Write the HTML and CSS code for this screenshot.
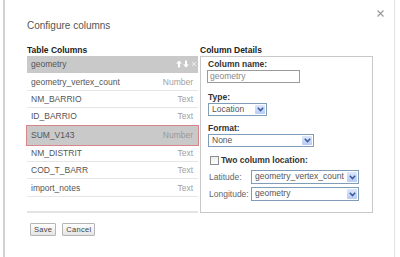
FILE: index.html
```
<!DOCTYPE html>
<html lang="en">
<head>
<meta charset="UTF-8">
<title>Configure columns</title>
<link rel="stylesheet" href="styles.css">
</head>
<body>

<div class="dialog">
    <!-- close button sits over the header corner -->
    <svg class="close" width="7" height="7" viewBox="0 0 7 7">
        <path d="M0.5 0.5 L6.5 6.5 M6.5 0.5 L0.5 6.5" stroke="#9a9a9a" stroke-width="1.2"/>
    </svg>

    <div class="title">Configure columns</div>

    <div class="columns">
        <div class="table-cols">
            <div class="heading">Table Columns</div>
            <div class="rows">
                <div class="row selected">
                    <span class="name">geometry</span>
                    <svg class="row-tools" width="21" height="8" viewBox="0 0 21 8">
                        <path d="M3 0.5 L6 3.5 L4 3.5 L4 7.5 L2 7.5 L2 3.5 L0 3.5 Z" fill="#fff"/>
                        <path d="M10 7.5 L13 4.5 L11 4.5 L11 0.5 L9 0.5 L9 4.5 L7 4.5 Z" fill="#fff"/>
                        <path d="M16 2 L20 6 M20 2 L16 6" stroke="#eee" stroke-width="1"/>
                    </svg>
                </div>
                <div class="row"><span class="name">geometry_vertex_count</span><span class="type">Number</span></div>
                <div class="row"><span class="name">NM_BARRIO</span><span class="type">Text</span></div>
                <div class="row"><span class="name">ID_BARRIO</span><span class="type">Text</span></div>
                <div class="row selected marked"><span class="name">SUM_V143</span><span class="type">Number</span></div>
                <div class="row"><span class="name">NM_DISTRIT</span><span class="type">Text</span></div>
                <div class="row"><span class="name">COD_T_BARR</span><span class="type">Text</span></div>
                <div class="row"><span class="name">import_notes</span><span class="type">Text</span></div>
            </div>
        </div>

        <div class="details">
            <div class="heading">Column Details</div>
            <div class="panel">
                <div class="label">Column name:</div>
                <div class="text-input">geometry</div>

                <div class="label type-label">Type:</div>
                <div class="select w-type">
                    <span class="value">Location</span>
                    <span class="arrow"><svg width="7" height="5" viewBox="0 0 7 5"><path d="M0.8 0.8 L3.5 3.6 L6.2 0.8" stroke="#3a5a9a" stroke-width="1.5" fill="none"/></svg></span>
                </div>

                <div class="label format-label">Format:</div>
                <div class="select w-format">
                    <span class="value">None</span>
                    <span class="arrow"><svg width="7" height="5" viewBox="0 0 7 5"><path d="M0.8 0.8 L3.5 3.6 L6.2 0.8" stroke="#3a5a9a" stroke-width="1.5" fill="none"/></svg></span>
                </div>

                <div class="check-row">
                    <span class="checkbox"></span>
                    <span class="check-label">Two column location:</span>
                </div>

                <div class="pair-row">
                    <span class="pair-label">Latitude:</span>
                    <div class="select w-pair">
                        <span class="value">geometry_vertex_count</span>
                        <span class="arrow"><svg width="7" height="5" viewBox="0 0 7 5"><path d="M0.8 0.8 L3.5 3.6 L6.2 0.8" stroke="#3a5a9a" stroke-width="1.5" fill="none"/></svg></span>
                    </div>
                </div>
                <div class="pair-row">
                    <span class="pair-label">Longitude:</span>
                    <div class="select w-pair">
                        <span class="value">geometry</span>
                        <span class="arrow"><svg width="7" height="5" viewBox="0 0 7 5"><path d="M0.8 0.8 L3.5 3.6 L6.2 0.8" stroke="#3a5a9a" stroke-width="1.5" fill="none"/></svg></span>
                    </div>
                </div>
            </div>
        </div>
    </div>

    <div class="buttons">
        <button class="btn">Save</button>
        <button class="btn">Cancel</button>
    </div>
</div>

</body>
</html>
```

FILE: styles.css
```
body {
    margin: 0;
    background-color: #ffffff;
    font-family: 'Liberation Sans', Arial, sans-serif;
    color: #555555;
}

.dialog {
    position: relative;
    margin-left: 3px;
    width: 392px;
    height: 257px;
    box-sizing: border-box;
    border-left: 2px solid #d2d2d2;
    border-right: 1px solid #e2e2e2;
    padding: 20px 0 0 22px;
}

.close {
    position: absolute;
    top: 10px;
    right: 10px;
}

.title {
    font-size: 10px;
    line-height: 12px;
    color: #555555;
    margin-bottom: 13px;
}

.columns {
    display: flex;
    gap: 2px;
}

.heading {
    font-size: 8.5px;
    line-height: 11px;
    font-weight: bold;
    color: #222222;
}

/* --- left list of columns --- */
.table-cols {
    width: 171px;
}

.rows {
    height: 157px;
    box-sizing: border-box;
    border-bottom: 2px solid #e4e4e4;
}

.row {
    display: flex;
    justify-content: space-between;
    align-items: center;
    height: 17.4px;
    box-sizing: border-box;
    padding: 0 5px 0 4px;
    border-bottom: 1px solid #e6e6e6;
    font-size: 8.5px;
}

.row .name {
    color: #555555;
}

.row .type {
    color: #a0a0a0;
}

.row.selected {
    background-color: #c9c9c9;
    border-bottom-color: #c9c9c9;
}

.row.selected .type {
    color: #999999;
}

.row.marked {
    height: 19px;
    box-shadow: 0 0 0 1px #d9838b;
}

.row-tools {
    margin-right: -4px;
}

/* --- right details panel --- */
.details {
    width: 173px;
}

.panel {
    height: 157px;
    box-sizing: border-box;
    border: 1px solid #c8c8c8;
    padding: 2px 0 0 7px;
    display: flex;
    flex-direction: column;
    align-items: flex-start;
}

.label {
    font-size: 8.5px;
    line-height: 11px;
    font-weight: bold;
    color: #333333;
}

.type-label {
    margin-top: 9px;
}

.format-label {
    margin-top: 7px;
}

.text-input {
    margin-left: -1px;
    width: 93px;
    height: 13px;
    box-sizing: border-box;
    border: 1px solid #9a9a9a;
    padding-left: 2px;
    font-size: 8.5px;
    line-height: 11px;
    color: #888888;
}

.select {
    display: flex;
    height: 13px;
    box-sizing: border-box;
    border: 1px solid #7f9db9;
    background-color: #ffffff;
    font-size: 8.5px;
    line-height: 11px;
    color: #555555;
}

.select .value {
    flex: 1;
    padding-left: 3px;
    white-space: nowrap;
    overflow: hidden;
}

.select .arrow {
    width: 10px;
    margin: 1px;
    display: flex;
    align-items: center;
    justify-content: center;
    background: linear-gradient(#dce7fc, #b7cbf4);
    border-radius: 1px;
}

.w-type {
    width: 59px;
}

.w-format {
    width: 106px;
}

.w-pair {
    width: 108px;
}

.check-row {
    display: flex;
    align-items: center;
    margin-top: 6px;
    height: 14px;
}

.checkbox {
    width: 9px;
    height: 9px;
    box-sizing: border-box;
    margin-left: 2px;
    border: 1px solid #8e8e8e;
    background: linear-gradient(#eeeeee, #ffffff);
}

.check-label {
    margin-left: 2px;
    font-size: 8.5px;
    font-weight: bold;
    color: #333333;
}

.pair-row {
    display: flex;
    align-items: center;
    margin-top: 3px;
    height: 14px;
}

.pair-row .select {
    height: 14px;
}

.pair-label {
    width: 42px;
    padding-left: 1px;
    font-size: 8.5px;
    color: #666666;
}

/* --- bottom buttons --- */
.buttons {
    display: flex;
    gap: 6px;
    margin: 10px 0 0 3px;
}

.btn {
    height: 13px;
    padding: 0 3px;
    border: 1px solid #b5b5b5;
    border-radius: 1px;
    background: linear-gradient(#ffffff, #e4e4e4);
    font-family: 'Liberation Sans', Arial, sans-serif;
    font-size: 7.5px;
    letter-spacing: 0.3px;
    color: #444444;
}
```
